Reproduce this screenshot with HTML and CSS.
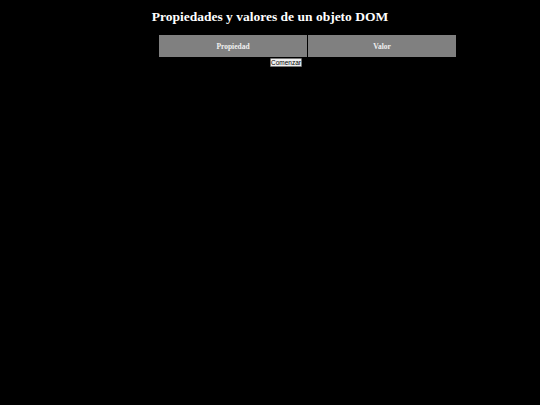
FILE: index.html
```html
<!DOCTYPE html>
<html>
<head>
<meta charset="utf-8">
<link rel="stylesheet" href="styles.css">
</head>
<body>
<h1 class="title">Propiedades y valores de un objeto DOM</h1>
<table class="props">
<tr><th>Propiedad</th><th>Valor</th></tr>
</table>
<div class="actions"><button class="start">Comenzar</button></div>
</body>
</html>
```
FILE: styles.css
```css
html, body { background: #000; margin: 0; padding: 0; }
body { color: #fff; font-family: "Liberation Serif", serif; }
.title { font-size: 13.5px; font-weight: bold; text-align: center; margin: 0; padding-top: 9px; line-height: 16px; height: 26px; }
.props { width: 299px; table-layout: fixed; border-collapse: separate; border-spacing: 1px 0; margin: 0 0 0 158px; }
.props th { background: #808080; color: #f0f0f0; font-size: 7.5px; font-weight: bold; height: 22px; padding: 0; }
.actions { display: flex; margin-left: 270px; margin-top: 1px; }
.start { display: block; margin: 0; font-family: "Liberation Sans", sans-serif; font-size: 6.5px; padding: 0; height: 9px; width: 32px; background: #f0f0f0; border: 1px solid #777; border-radius: 1px; color: #000; line-height: 7px; }
```
